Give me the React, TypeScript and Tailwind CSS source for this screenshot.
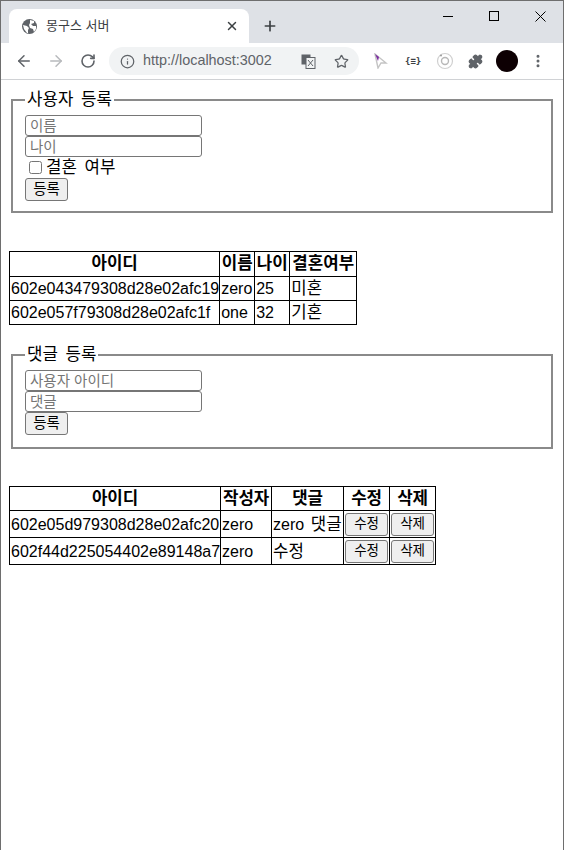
import { ArrowLeft, ArrowRight, Info, MoreVertical, Plus, RotateCw, Star, X, Puzzle } from "lucide-react";

const FONT = "font-['Liberation_Sans','Noto_Sans_CJK_KR',sans-serif]";

const users = [
  ["602e043479308d28e02afc19", "zero", "25", "미혼"],
  ["602e057f79308d28e02afc1f", "one", "32", "기혼"],
];

const comments = [
  ["602e05d979308d28e02afc20", "zero", "zero 댓글"],
  ["602f44d225054402e89148a7", "zero", "수정"],
];

// hangul runs are drawn a bit larger than the latin text
function Txt({ children }: { children: string }) {
  const parts = children.split(/([가-힣]+(?: [가-힣]+)*)/);
  return (
    <>
      {parts.map((p, i) =>
        i % 2 === 1 ? (
          <span key={i} className="text-[16.8px] [word-spacing:3px]">{p}</span>
        ) : (
          <span key={i} className={p.endsWith(" ") ? "[word-spacing:2px]" : ""}>{p}</span>
        )
      )}
    </>
  );
}

function Field({ placeholder }: { placeholder: string }) {
  return (
    <input
      placeholder={placeholder}
      className="block w-[177px] h-[21px] px-[4px] border border-[#767676] rounded-[3px] text-[14.5px] leading-none placeholder:text-[#757575]"
    />
  );
}

function SubmitButton() {
  return (
    <button className="block w-[43px] h-[23px] bg-[#efefef] border border-[#767676] rounded-[3px] text-[14.5px] leading-none text-black">
      등록
    </button>
  );
}

function CellButton({ label }: { label: string }) {
  return (
    <button className="block w-[43px] h-[23px] bg-[#efefef] border border-[#767676] rounded-[3px] text-[13.5px] leading-none text-black">
      {label}
    </button>
  );
}

function Chrome() {
  return (
    <div className="shrink-0">
      {/* tab strip */}
      <div className="h-[42px] bg-[#dee1e6] flex items-end pl-[8px]">
        <div className="w-[240px] h-[34px] bg-white rounded-t-[8px] flex items-center pl-[13px] pr-[10px]">
          <svg width="15" height="15" viewBox="0 0 15 15" className="shrink-0">
            <circle cx="7.5" cy="7.5" r="7.5" fill="#5f6368" />
            <path d="M1 6l4 1 2 2-1 2 0 3-1 0-3-4zM8 1l4 1 0 2-3 1 2 2 3 0 0 3-2 3-1-3-3-1-1-3 1-2z" fill="#fff" />
          </svg>
          <span className="ml-[9px] text-[13px] text-[#3c4043] flex-1">몽구스 서버</span>
          <X size={14} strokeWidth={2.5} className="text-[#3c4043]" />
        </div>
        <div className="ml-[13px] mb-[9px] text-[#3c4043]">
          <Plus size={16} strokeWidth={2.5} />
        </div>
        <div className="ml-auto flex items-center self-start h-[30px]">
          <div className="w-[46px] flex justify-center">
            <svg width="10" height="10" viewBox="0 0 10 10"><path d="M0 5.5h10" stroke="#000" /></svg>
          </div>
          <div className="w-[46px] flex justify-center">
            <svg width="10" height="10" viewBox="0 0 10 10"><rect x="0.5" y="0.5" width="9" height="9" fill="none" stroke="#000" /></svg>
          </div>
          <div className="w-[46px] flex justify-center">
            <svg width="11" height="11" viewBox="0 0 11 11"><path d="M0.5 0.5l10 10M10.5 0.5l-10 10" stroke="#000" /></svg>
          </div>
        </div>
      </div>
      {/* toolbar */}
      <div className="h-[37px] bg-white border-b border-[#d0d2d5] flex items-center pl-[14px] pr-[13px]">
        <ArrowLeft size={18} strokeWidth={2} className="text-[#5f6368]" />
        <ArrowRight size={18} strokeWidth={2} className="ml-[14px] text-[#b8babd]" />
        <RotateCw size={16} strokeWidth={2.4} className="ml-[15px] text-[#5f6368]" />
        <div className="ml-[13px] w-[250px] h-[28px] shrink-0 rounded-full bg-[#f1f3f4] flex items-center pl-[11px]">
          <Info size={15} strokeWidth={2} className="text-[#5f6368]" />
          <span className="ml-[8px] text-[14.4px] text-[#5f6368]">http://localhost:3002</span>
          <svg width="15" height="15" viewBox="0 0 15 15" className="ml-[29px]">
            <rect x="0.5" y="0.5" width="9" height="10" fill="#5f6368" />
            <rect x="5" y="3.5" width="9" height="11" fill="#f1f3f4" stroke="#5f6368" />
            <path d="M7 6l5 6M12 6l-5 6" stroke="#5f6368" fill="none" />
          </svg>
          <Star size={15} strokeWidth={2} className="ml-[18px] text-[#5f6368]" />
        </div>
        <svg width="14" height="16" viewBox="0 0 14 16" className="ml-[15px]">
          <path d="M1 1l11 9-5 0-3 5z" fill="none" stroke="#c4c4c4" strokeWidth="1.4" />
          <path d="M1 1l4 3-1 4z" fill="#7b2ea0" />
        </svg>
        <span className="ml-[17px] text-[9px] font-bold text-[#3c4043] leading-none font-['DejaVu_Sans_Mono',monospace]">{"{≡}"}</span>
        <svg width="18" height="18" viewBox="0 0 18 18" className="ml-[15px]">
          <circle cx="9" cy="9" r="7.5" fill="none" stroke="#d0d0d0" strokeWidth="1.2" />
          <circle cx="9" cy="9" r="3.5" fill="none" stroke="#b8b8b8" strokeWidth="1.4" />
          <circle cx="5" cy="3.5" r="1" fill="#9a9a9a" />
        </svg>
        <Puzzle size={15} className="ml-[14px] text-[#5f6368] fill-[#5f6368]" />
        <div className="ml-[13px] w-[22px] h-[22px] rounded-full bg-[#0d0003]" />
        <MoreVertical size={16} strokeWidth={2.5} className="ml-[12px] text-[#5f6368]" />
      </div>
    </div>
  );
}

export default function App() {
  const th = "border border-black px-px py-px font-bold text-center leading-[22px] whitespace-nowrap";
  const th2 = "border border-black px-px py-px font-bold text-center leading-[21px] whitespace-nowrap";
  const td = "border border-black px-px py-px text-left leading-[21px] whitespace-nowrap first:pr-0";

  return (
    <div className={`${FONT} h-[850px] w-[564px] bg-white border-l border-t border-r border-[#6e6e6e] flex flex-col text-[16px] text-black overflow-hidden`}>
      <Chrome />
      <div className="pt-[9px] px-[8px]">
        <fieldset className="mx-[2px] mt-[2px] h-[122px] border-solid border-[#8a8a8a] px-[12px] pb-[10px] pt-[6px] [border-width:2px]">
          <legend className="px-[2px] leading-[18px] h-[18px]"><Txt>사용자 등록</Txt></legend>
          <Field placeholder="이름" />
          <Field placeholder="나이" />
          <label className="flex items-center h-[21px]">
            <input type="checkbox" className="w-[13px] h-[13px] ml-[4px] mr-[4px]" />
            <Txt>결혼 여부</Txt>
          </label>
          <SubmitButton />
        </fieldset>

        <table className="mt-[38px] border-collapse">
          <thead>
            <tr>
              <th className={`${th} w-[210px]`}><Txt>아이디</Txt></th>
              <th className={`${th} w-[35px]`}><Txt>이름</Txt></th>
              <th className={`${th} w-[35px]`}><Txt>나이</Txt></th>
              <th className={`${th} w-[67px]`}><Txt>결혼여부</Txt></th>
            </tr>
          </thead>
          <tbody>
            {users.map((u) => (
              <tr key={u[0]}>
                {u.map((c) => (
                  <td key={c} className={td}><Txt>{c}</Txt></td>
                ))}
              </tr>
            ))}
          </tbody>
        </table>

        <fieldset className="mx-[2px] mt-[21px] h-[103px] border-solid border-[#8a8a8a] px-[12px] pb-[10px] pt-[6px] [border-width:2px]">
          <legend className="px-[2px] leading-[18px] h-[18px]"><Txt>댓글 등록</Txt></legend>
          <Field placeholder="사용자 아이디" />
          <Field placeholder="댓글" />
          <SubmitButton />
        </fieldset>

        <table className="mt-[37px] border-collapse">
          <thead>
            <tr>
              <th className={`${th2} w-[211px]`}><Txt>아이디</Txt></th>
              <th className={`${th2} w-[51px]`}><Txt>작성자</Txt></th>
              <th className={`${th2} w-[72px]`}><Txt>댓글</Txt></th>
              <th className={`${th2} w-[46px]`}><Txt>수정</Txt></th>
              <th className={`${th2} w-[46px]`}><Txt>삭제</Txt></th>
            </tr>
          </thead>
          <tbody>
            {comments.map((c) => (
              <tr key={c[0]} className="h-[27px]">
                {c.map((v) => (
                  <td key={v} className={td}><Txt>{v}</Txt></td>
                ))}
                <td className={td}><CellButton label="수정" /></td>
                <td className={td}><CellButton label="삭제" /></td>
              </tr>
            ))}
          </tbody>
        </table>
      </div>
    </div>
  );
}
